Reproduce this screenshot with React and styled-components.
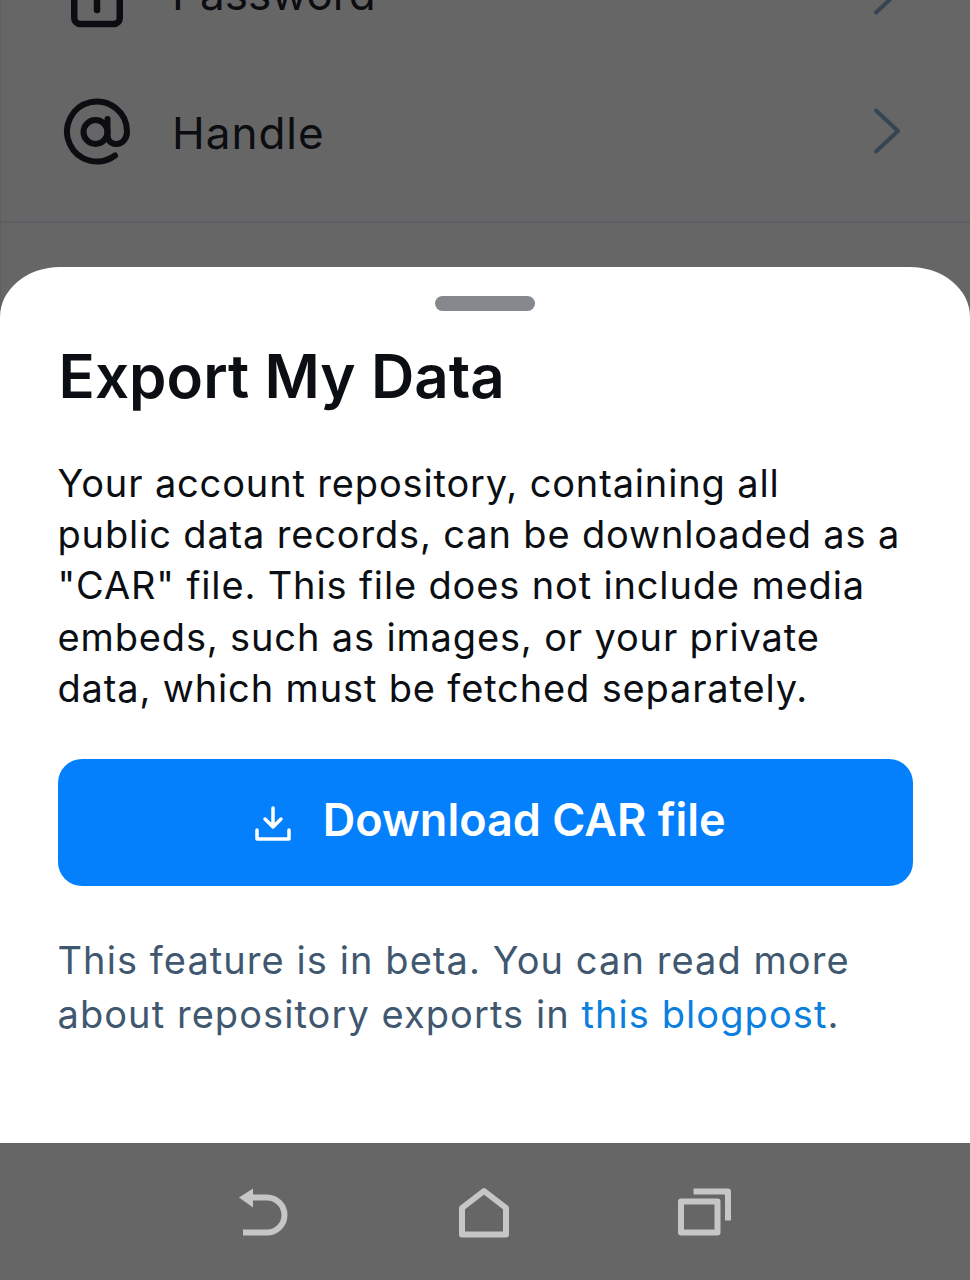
import React from "react";
import styled, { createGlobalStyle } from "styled-components";

const GlobalStyle = createGlobalStyle`
  html, body {
    margin: 0;
    padding: 0;
    background: #666666;
  }
  * {
    box-sizing: border-box;
  }
`;

const Screen = styled.div`
  position: relative;
  width: 970px;
  height: 1280px;
  overflow: hidden;
  background: #666666;
  font-family: Inter, "Liberation Sans", sans-serif;
  display: flex;
  flex-direction: column;
`;

const SettingsList = styled.div`
  margin-top: -77.5px;
  border-left: 1px solid #5f5f5f;
  flex: 1;
`;

const SettingsRow = styled.div`
  height: 139px;
  display: flex;
  align-items: center;
  padding: 0 69px 0 63px;
  gap: 41px;
`;

const Divider = styled.div`
  margin-top: 20.5px;
  height: 2px;
  background: #5b5e62;
`;

const RowIcon = styled.div`
  width: 67px;
  height: 67px;
  flex-shrink: 0;
  color: #0b0d10;
  svg {
    display: block;
    overflow: visible;
  }
`;

const RowLabel = styled.div`
  flex: 1;
  font-size: 44px;
  line-height: 52px;
  letter-spacing: ${(props) => props.$spacing ?? 1}px;
  color: #0b0d10;
  padding-top: 4px;
`;

const Sheet = styled.div`
  position: absolute;
  left: 0;
  right: 0;
  top: 267px;
  height: 876px;
  background: #ffffff;
  border-radius: 60px 60px 0 0 / 50px 50px 0 0;
  padding: 29px 57px 0 57.5px;
  display: flex;
  flex-direction: column;
`;

const Handle = styled.div`
  width: 100px;
  height: 15px;
  border-radius: 8px;
  background: #85888c;
  align-self: center;
`;

const Title = styled.h1`
  margin: 29px 0 0;
  padding-left: 1px;
  font-size: 60px;
  line-height: 72px;
  font-weight: 600;
  color: #0b0f14;
  letter-spacing: 0.05px;
`;

const Body = styled.p`
  margin: 46px 0 0;
  font-size: 38px;
  line-height: 51.2px;
  letter-spacing: 0.85px;
  color: #0b0f14;
`;

const DownloadButton = styled.button`
  margin-top: 45px;
  height: 127px;
  border: none;
  border-radius: 24px;
  background: #0480fd;
  color: #ffffff;
  font-family: inherit;
  font-size: 45px;
  font-weight: 580;
  display: flex;
  align-items: center;
  justify-content: center;
  gap: 32px;
  padding: 0 0 6px 10px;
  svg {
    margin-top: 8px;
  }
`;

const Note = styled.p`
  margin: 47px 0 0;
  font-size: 38px;
  line-height: 54px;
  letter-spacing: 1.07px;
  color: #3f5870;
`;

const NoteLink = styled.span`
  color: #0a7fe0;
`;

const NavBar = styled.div`
  position: absolute;
  left: 0;
  right: 0;
  bottom: 0;
  height: 137px;
  background: #666666;
  display: flex;
  align-items: center;
  justify-content: center;
  gap: 167px;
  svg {
    display: block;
  }
`;

const Chevron = () => (
  <svg width="28" height="46" viewBox="0 0 28 46" fill="none" stroke="#364554" strokeWidth="4" strokeLinecap="round" strokeLinejoin="round">
    <path d="M3 2.500 L25 23 L3 43.500" />
  </svg>
);

const LockIcon = () => (
  <svg width="67" height="67" viewBox="0 0 67 67" fill="none" stroke="currentColor" strokeWidth="6.500" strokeLinecap="round" strokeLinejoin="round">
    <rect x="10.250" y="18" width="45.500" height="47" rx="6" />
    <path d="M33 36 V51" />
  </svg>
);

const AtIcon = () => (
  <svg width="67" height="67" viewBox="0 0 67 67" fill="none" stroke="currentColor" strokeWidth="6" strokeLinecap="round" strokeLinejoin="round">
    <circle cx="31.500" cy="34" r="12" />
    <path d="M43.500 21 V37 C43.500 50 63 49 63 33.500 A30 30 0 1 0 51 57.500" />
  </svg>
);

const DownloadIcon = () => (
  <svg width="36" height="36" viewBox="0 0 36 36" fill="none" stroke="#ffffff" strokeWidth="3.500" strokeLinecap="round" strokeLinejoin="round">
    <path d="M18 2 V20 M10 13 L18 21 L26 13" />
    <path d="M2 24 V33 H34 V24" />
  </svg>
);

const BackIcon = () => (
  <svg width="52" height="50" viewBox="0 0 52 50" fill="none" stroke="#c6c6c6" strokeWidth="6">
    <path d="M10 10.500 H28 A17.500 17.500 0 0 1 28 45.500 H4" />
    <path d="M0 10.500 L14 1.500 V20.500 Z" fill="#c6c6c6" stroke="none" />
  </svg>
);

const HomeIcon = () => (
  <svg width="52" height="52" viewBox="0 0 52 52" fill="none" stroke="#c6c6c6" strokeWidth="6" strokeLinejoin="round">
    <path d="M26 5 L48 22 V48.500 H4 V22 Z" />
  </svg>
);

const RecentsIcon = () => (
  <svg width="54" height="50" viewBox="0 0 54 50" fill="none" stroke="#c6c6c6" strokeWidth="6" strokeLinejoin="round">
    <rect x="4" y="14.500" width="36.500" height="31" />
    <path d="M16.500 4.500 H51 V33.500" />
  </svg>
);

const App = () => (
  <Screen>
    <GlobalStyle />
    <SettingsList>
      <SettingsRow>
        <RowIcon><LockIcon /></RowIcon>
        <RowLabel $spacing={0}>Password</RowLabel>
        <Chevron />
      </SettingsRow>
      <SettingsRow>
        <RowIcon><AtIcon /></RowIcon>
        <RowLabel>Handle</RowLabel>
        <Chevron />
      </SettingsRow>
      <Divider />
    </SettingsList>
    <Sheet>
      <Handle />
      <Title>Export My Data</Title>
      <Body>
        Your account repository, containing all<br />
        public data records, can be downloaded as a<br />
        "CAR" file. This file does not include media<br />
        embeds, such as images, or your private<br />
        data, which must be fetched separately.
      </Body>
      <DownloadButton>
        <DownloadIcon />
        Download CAR file
      </DownloadButton>
      <Note>
        This feature is in beta. You can read more<br />
        about repository exports in <NoteLink>this blogpost</NoteLink>.
      </Note>
    </Sheet>
    <NavBar>
      <BackIcon />
      <HomeIcon />
      <RecentsIcon />
    </NavBar>
  </Screen>
);

export default App;
